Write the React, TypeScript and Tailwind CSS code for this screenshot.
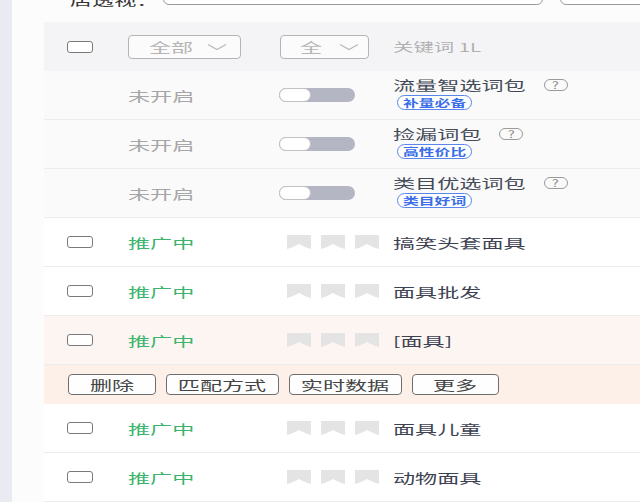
import React from "react";

type P = { children: React.ReactNode; s?: string };

function W({ children, s }: P) {
  return (
    <span className={"inline-block origin-left whitespace-nowrap " + (s ?? "scale-x-[1.7]")}>
      {children}
    </span>
  );
}

function WC({ children, s }: P) {
  return (
    <span className={"inline-block origin-center whitespace-nowrap " + (s ?? "scale-x-[1.7]")}>
      {children}
    </span>
  );
}

function Checkbox() {
  return <span className="block h-[12px] w-[26px] rounded-[3px] border-[1.5px] border-[#7a7a7a] bg-white" />;
}

function Toggle() {
  return (
    <span className="flex h-[14px] w-[76px] rounded-full bg-[#b4b7c3]">
      <span className="h-[14px] w-[32px] rounded-full border border-[#c2c2c2] bg-white" />
    </span>
  );
}

function Chevron() {
  return (
    <svg width="20" height="8" viewBox="0 0 20 8" className="block">
      <path d="M1 1.5 L10 6.5 L19 1.5" fill="none" stroke="#b8b8b8" strokeWidth="1.2" />
    </svg>
  );
}

function Question() {
  return (
    <span className="flex h-[12px] w-[24px] items-center justify-center rounded-full border border-[#9a9a9a] text-[10px] leading-none text-[#8c8c8c]">
      <WC s="scale-x-[1.5]">?</WC>
    </span>
  );
}

function Tag({ text }: { text: string }) {
  return (
    <span className="flex h-[15px] w-[75px] items-center rounded-full border-[1.5px] border-[#5a86ea] bg-white pl-[5px] text-[10px] font-bold leading-none text-[#3a6ee8]">
      <W s="scale-x-[1.58]">{text}</W>
    </span>
  );
}

function Bookmark() {
  return (
    <svg width="24" height="14" viewBox="0 0 24 14" className="block">
      <path d="M0 0 H24 V14 C18 12.5 14 10 12 9 C10 10 6 12.5 0 14 Z" fill="#e4e4e4" />
    </svg>
  );
}

function PackRow({ title, tag }: { title: string; tag: string }) {
  return (
    <div className="flex h-[49px] items-center border-b border-[#ececec] bg-[#fafafa]">
      <div className="w-[84px]" />
      <div className="w-[151px] text-[13px] leading-none text-[#a6a6a6]">
        <W>未开启</W>
      </div>
      <div className="w-[114px]">
        <Toggle />
      </div>
      <div className="flex flex-col gap-[2px] pb-[3px]">
        <div className="flex items-center">
          <span className="text-[13px] leading-[16px] text-[#444a58]">
            <W>{title}</W>
          </span>
          <span className="inline-block" style={{ width: title.length * 13 * 0.7 + 18 }} />
          <Question />
        </div>
        <div className="pl-[4px]">
          <Tag text={tag} />
        </div>
      </div>
    </div>
  );
}

function KwRow({ kw, bg }: { kw: string; bg?: string }) {
  return (
    <div className={"flex h-[49px] items-center border-b border-[#ececec] " + (bg ?? "bg-white")}>
      <div className="w-[84px] pl-[23px]">
        <Checkbox />
      </div>
      <div className="w-[152px] text-[13px] leading-none text-[#3cb46e]">
        <W>推广中</W>
      </div>
      <div className="flex w-[113px] gap-[10px] pl-[7px]">
        <Bookmark />
        <Bookmark />
        <Bookmark />
      </div>
      <div className="text-[13px] leading-none text-[#3d4252]">
        <W>{kw}</W>
      </div>
    </div>
  );
}

function Btn({ text, w }: { text: string; w: string }) {
  return (
    <span
      className={
        "flex h-[21px] items-center justify-center rounded-[4px] border border-[#6e6e6e] bg-[#fefefe] text-[13px] leading-none text-[#444] " +
        w
      }
    >
      <WC>{text}</WC>
    </span>
  );
}

export default function App() {
  return (
    <div className="flex h-[502px] w-[640px] overflow-hidden bg-white font-['Noto_Sans_CJK_SC','Noto_Sans',sans-serif]">
      <div className="w-[12px] shrink-0 bg-[#eaeaf2]" />
      <div className="flex w-[628px] flex-col bg-[#fcfcfc]">
        <div className="h-[22px] overflow-hidden">
          <div className="-mt-[19px] flex h-[24px] items-start">
            <span className="ml-[58px] mt-[12px] w-[93px] shrink-0 text-[13px] leading-none text-[#333]">
              <W>店透视：</W>
            </span>
            <span className="h-[24px] w-[380px] shrink-0 rounded-[6px] border-[1.5px] border-[#9a9a9a] bg-white" />
            <span className="ml-[17px] h-[24px] w-[120px] shrink-0 rounded-[6px] border-[1.5px] border-[#9a9a9a] bg-white" />
          </div>
        </div>
        <div className="ml-[32px] flex flex-col">
          <div className="flex h-[49px] items-center bg-[#f4f4f6]">
            <div className="w-[84px] pl-[23px]">
              <Checkbox />
            </div>
            <div className="w-[152px]">
              <div className="flex h-[24px] w-[113px] items-center rounded-[4px] border-[1.5px] border-[#b4b4b4] bg-[#fbfbfb] pl-[20px] text-[13px] leading-none text-[#b5b5b5]">
                <W>全部</W>
                <span className="ml-auto mr-[13px]">
                  <Chevron />
                </span>
              </div>
            </div>
            <div className="w-[113px]">
              <div className="flex h-[24px] w-[89px] items-center rounded-[4px] border-[1.5px] border-[#b4b4b4] bg-[#fbfbfb] pl-[19px] text-[13px] leading-none text-[#b5b5b5]">
                <W>全</W>
                <span className="ml-auto mr-[9px]">
                  <Chevron />
                </span>
              </div>
            </div>
            <div className="text-[12px] leading-none text-[#b0b0b0]">
              <W>关键词 1L</W>
            </div>
          </div>
          <PackRow title="流量智选词包" tag="补量必备" />
          <PackRow title="捡漏词包" tag="高性价比" />
          <PackRow title="类目优选词包" tag="类目好词" />
          <KwRow kw="搞笑头套面具" />
          <KwRow kw="面具批发" />
          <KwRow kw="[面具]" bg="bg-[#fdf5f2]" />
          <div className="flex h-[39px] items-center gap-[10px] bg-[#fdf0e9] pl-[24px]">
            <Btn text="删除" w="w-[88px]" />
            <Btn text="匹配方式" w="w-[113px]" />
            <Btn text="实时数据" w="w-[113px]" />
            <Btn text="更多" w="w-[87px]" />
          </div>
          <KwRow kw="面具儿童" />
          <KwRow kw="动物面具" />
        </div>
      </div>
    </div>
  );
}
